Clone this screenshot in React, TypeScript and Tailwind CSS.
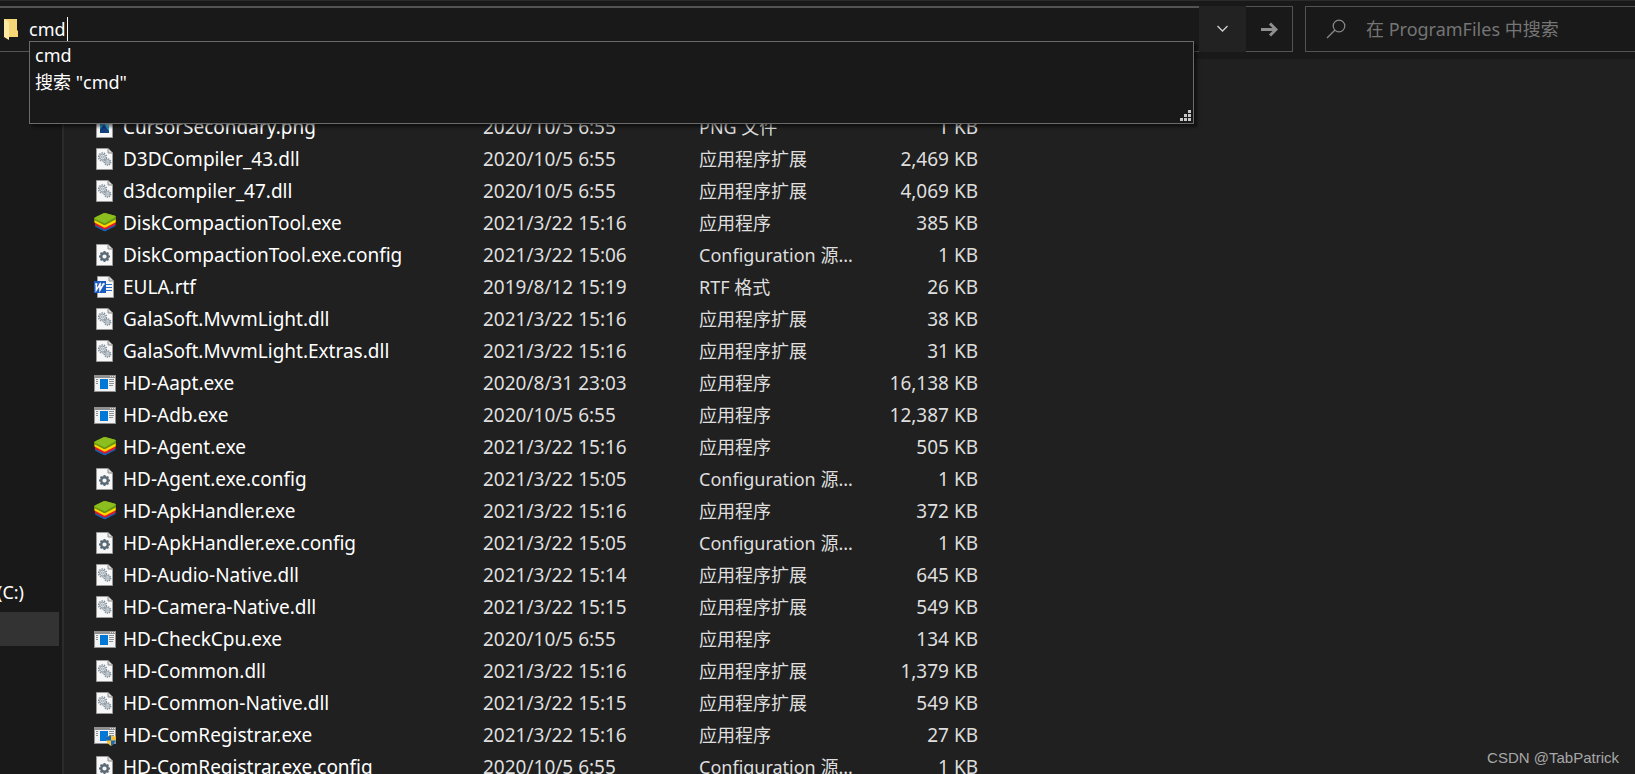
import React from "react";

type Kind = "png" | "dll" | "stack" | "config" | "word" | "app" | "shield";

type FileRow = { kind: Kind; name: string; date: string; type: string; size: string };

const EXT = "应用程序扩展";
const APP = "应用程序";
const CFG = "Configuration 源...";

const files: FileRow[] = [
  { kind: "png", name: "CursorSecondary.png", date: "2020/10/5 6:55", type: "PNG 文件", size: "1 KB" },
  { kind: "dll", name: "D3DCompiler_43.dll", date: "2020/10/5 6:55", type: EXT, size: "2,469 KB" },
  { kind: "dll", name: "d3dcompiler_47.dll", date: "2020/10/5 6:55", type: EXT, size: "4,069 KB" },
  { kind: "stack", name: "DiskCompactionTool.exe", date: "2021/3/22 15:16", type: APP, size: "385 KB" },
  { kind: "config", name: "DiskCompactionTool.exe.config", date: "2021/3/22 15:06", type: CFG, size: "1 KB" },
  { kind: "word", name: "EULA.rtf", date: "2019/8/12 15:19", type: "RTF 格式", size: "26 KB" },
  { kind: "dll", name: "GalaSoft.MvvmLight.dll", date: "2021/3/22 15:16", type: EXT, size: "38 KB" },
  { kind: "dll", name: "GalaSoft.MvvmLight.Extras.dll", date: "2021/3/22 15:16", type: EXT, size: "31 KB" },
  { kind: "app", name: "HD-Aapt.exe", date: "2020/8/31 23:03", type: APP, size: "16,138 KB" },
  { kind: "app", name: "HD-Adb.exe", date: "2020/10/5 6:55", type: APP, size: "12,387 KB" },
  { kind: "stack", name: "HD-Agent.exe", date: "2021/3/22 15:16", type: APP, size: "505 KB" },
  { kind: "config", name: "HD-Agent.exe.config", date: "2021/3/22 15:05", type: CFG, size: "1 KB" },
  { kind: "stack", name: "HD-ApkHandler.exe", date: "2021/3/22 15:16", type: APP, size: "372 KB" },
  { kind: "config", name: "HD-ApkHandler.exe.config", date: "2021/3/22 15:05", type: CFG, size: "1 KB" },
  { kind: "dll", name: "HD-Audio-Native.dll", date: "2021/3/22 15:14", type: EXT, size: "645 KB" },
  { kind: "dll", name: "HD-Camera-Native.dll", date: "2021/3/22 15:15", type: EXT, size: "549 KB" },
  { kind: "app", name: "HD-CheckCpu.exe", date: "2020/10/5 6:55", type: APP, size: "134 KB" },
  { kind: "dll", name: "HD-Common.dll", date: "2021/3/22 15:16", type: EXT, size: "1,379 KB" },
  { kind: "dll", name: "HD-Common-Native.dll", date: "2021/3/22 15:15", type: EXT, size: "549 KB" },
  { kind: "shield", name: "HD-ComRegistrar.exe", date: "2021/3/22 15:16", type: APP, size: "27 KB" },
  { kind: "config", name: "HD-ComRegistrar.exe.config", date: "2020/10/5 6:55", type: CFG, size: "1 KB" },
];

function Page({ x = 2 }: { x?: number }) {
  return (
    <g transform={`translate(${x} 0)`}>
      <path d="M.5 .5h11.5l4.5 4.5v16.500h-16z" fill="#f7f7f7" stroke="#9a9a9a" />
      <path d="M12 .5v4.500h4.500" fill="#dcdcdc" stroke="#8a8a8a" />
    </g>
  );
}

function AppWindow() {
  return (
    <g>
      <rect x=".5" y="3.500" width="21" height="16" fill="#f2f2f2" stroke="#8f8f8f" />
      <path d="M0 3h22v3H0z" fill="#8f8f8f" />
      <path d="M16 4h1v1h-1zM18 4h1v1h-1zM20 4h1v1h-1z" fill="#e4e4e4" />
      <rect x="6" y="7" width="8" height="10" fill="#0078d7" />
      <path d="M2 7.500h2M2 9.500h2M2 11.500h2M15 7.500h5M15 9.500h5M15 11.500h5M15 13.500h4" stroke="#8f8f8f" />
    </g>
  );
}

function FileIcon({ kind }: { kind: Kind }) {
  return (
    <svg viewBox="0 0 22 22" className="size-[22px] shrink-0" fill="none" aria-hidden="true">
      {kind === "png" && (
        <>
          <Page />
          <path d="M6 6h9v11H6z" fill="#2a9bd8" />
          <path d="M10 6h5v5l-3-1z" fill="#7fd0f2" />
          <path d="M6 17v-4l4-4 5 6v2z" fill="#123f7d" />
        </>
      )}
      {kind === "dll" && (
        <>
          <Page />
          <circle cx="8.500" cy="9" r="3.900" stroke="#7f8c97" strokeWidth="1.500" strokeDasharray="1.400 1" />
          <circle cx="8.500" cy="9" r="2.800" fill="#e3e8eb" stroke="#8d99a3" strokeWidth=".9" />
          <circle cx="8.500" cy="9" r="1.100" fill="#f7f7f7" stroke="#8d99a3" strokeWidth=".8" />
          <circle cx="13.500" cy="14" r="3.200" stroke="#7f8c97" strokeWidth="1.400" strokeDasharray="1.200 1" />
          <circle cx="13.500" cy="14" r="2.300" fill="#e9edef" stroke="#8d99a3" strokeWidth=".9" />
          <circle cx="13.500" cy="14" r=".9" fill="#f7f7f7" stroke="#8d99a3" strokeWidth=".8" />
        </>
      )}
      {kind === "config" && (
        <>
          <Page />
          <circle cx="10.500" cy="12.500" r="3.300" stroke="#5b6a75" strokeWidth="2.400" />
          <path
            d="M10.500 7v2M10.500 16v2M5 12.500h2M14 12.500h2M6.600 8.600l1.400 1.400M13 15l1.400 1.400M6.600 16.400l1.400-1.400M13 10l1.400-1.400"
            stroke="#5b6a75"
            strokeWidth="2"
          />
        </>
      )}
      {kind === "word" && (
        <>
          <Page x={3} />
          <path d="M12 8.500h6M12 11.500h6M12 14.500h6" stroke="#2b6cc4" />
          <path d="M0 5h12v12H0z" fill="#1d5bbf" />
          <path d="M2.300 7.500v6.500L6 8.500V14l3.800-6.500" stroke="#fff" strokeWidth="1.500" />
          <path d="M1 8h2.500M4.800 8h2.500M8.500 8H11" stroke="#fff" />
        </>
      )}
      {kind === "stack" && (
        <>
          <path d="M1 12.500 10.500 17 21.500 12.200V14L11.500 19.300h-1.500L1.200 14.800z" fill="#0d63b3" />
          <path d="M.7 10 10.500 15 21.600 9.500v3.200L11.500 17.600h-1.500L1 13z" fill="#e0182d" />
          <path d="M.3 7.500 10.500 13 21.800 7v3.300L11.500 15.500h-1.500L.5 10.500z" fill="#ffd500" />
          <path
            d="M.9 5.600 9 1.500q1.500-.7 3-.3L21 3.700q1 .4.900 1.400v2.200L11.300 13q-.6.300-1.200 0L.2 8V6.600q0-.6.700-1z"
            fill="#6a9a12"
          />
          <path
            d="M.9 5.600 9 1.500q1.500-.7 3-.3L21 3.700q1 .4.500 1.400L11.300 11q-.6.300-1.200 0L.2 6.600q0-.6.700-1z"
            fill="#8cbf1e"
          />
        </>
      )}
      {(kind === "app" || kind === "shield") && <AppWindow />}
      {kind === "shield" && (
        <>
          <path d="M17 11c1.500 1 3 1.500 5 1.500 0 4-1 7-5 9.500-4-2.500-5-5.500-5-9.500 2 0 3.500-.5 5-1.500z" fill="#f9c234" />
          <path d="M17 11v5.500h-4.700c-.3-1.300-.3-2.500-.3-4 2 0 3.500-.5 5-1.500zM17 16.500h4.500c-.6 2.300-1.800 4-4.500 5.500z" fill="#1469bd" />
        </>
      )}
    </svg>
  );
}

export default function App() {
  return (
    <div className="flex h-screen flex-col overflow-hidden bg-[#202020] font-['Noto_Sans','Noto_Sans_CJK_SC',sans-serif] text-lg leading-6 text-white">
      <header className="relative flex h-[59px] shrink-0 items-start gap-3 border-t border-[#2b2b2b] bg-[#191919] pt-[5px]">
        <form className="flex h-[46px] w-[1293px] shrink-0">
          <label className="flex min-w-0 flex-1 items-center border-t-2 border-b border-[#535353] pb-0.5 pl-1">
            <svg viewBox="0 0 14 22" className="h-[22px] w-3.5 shrink-0" aria-hidden="true">
              <path d="M0 1h13v11l1 1v6H4z" fill="#f5d576" />
              <path d="M0 1l5 3v18l-5-3z" fill="#ffe9a3" />
            </svg>
            <input
              aria-label="地址"
              defaultValue="cmd"
              className="ml-[11px] h-6 w-[38px] bg-transparent p-0 outline-none"
            />
            <span className="h-6 w-px bg-white" />
          </label>
          <button type="button" aria-label="展开" className="flex w-[47px] items-center justify-center bg-[#222222]">
            <svg viewBox="0 0 12 8" className="h-2 w-3" fill="none" aria-hidden="true">
              <path d="M.5 1l5 5 5-5" stroke="#d0d0d0" strokeWidth="1.300" />
            </svg>
          </button>
          <button
            type="submit"
            aria-label="转到"
            className="flex w-[47px] items-center justify-center border border-l-0 border-[#535353]"
          >
            <svg viewBox="0 0 18 16" className="h-4 w-[18px]" fill="none" aria-hidden="true">
              <path d="M1 8.500h15M10 2.500l6 6-6 6" stroke="#8f8f8f" strokeWidth="3" />
            </svg>
          </button>
        </form>
        <label className="flex h-[46px] min-w-0 flex-1 items-center gap-5 border border-r-0 border-[#535353] pl-5">
          <svg viewBox="0 0 20 20" className="size-5 shrink-0" fill="none" aria-hidden="true">
            <circle cx="13" cy="7" r="5.800" stroke="#8a8a8a" strokeWidth="1.200" />
            <path d="M9 11l-8 8" stroke="#8a8a8a" strokeWidth="1.300" />
          </svg>
          <input
            type="search"
            aria-label="搜索"
            placeholder="在 ProgramFiles 中搜索"
            className="min-w-0 flex-1 bg-transparent outline-none placeholder:text-[#757575]"
          />
        </label>
        <ul className="absolute top-10 left-[29px] z-10 h-[83px] w-[1165px] border border-[#6b6b6b] bg-[#191919] pl-[5px] shadow-[3px_3px_3px_rgba(0,0,0,0.5)]">
          <li className="h-[27px] leading-[27px]">cmd</li>
          <li className="h-[27px] leading-[27px]">搜索 "cmd"</li>
          <li className="absolute right-0.5 bottom-0.5">
            <svg viewBox="0 0 11 11" className="size-[11px]" aria-hidden="true">
              <path d="M8 0h3v3H8zM4 4h3v3H4zM8 4h3v3H8zM0 8h3v3H0zM4 8h3v3H4zM8 8h3v3H8z" fill="#c8c8c8" />
            </svg>
          </li>
        </ul>
      </header>

      <div className="flex min-h-0 flex-1">
        <nav className="flex w-16 shrink-0 flex-col border-r-2 border-[#2b2b2b] bg-[#191919] pt-[517px]">
          <a href="#c" className="mb-1 flex h-8 w-6 items-center justify-end overflow-hidden">
            (C:)
          </a>
          <a href="#d" aria-label="D:" className="h-[34px] w-[59px] bg-[#333333]" />
        </nav>
        <main className="min-w-0 flex-1 overflow-hidden pt-[52px] pl-[30px]">
          <table className="table-fixed border-collapse text-[19px] text-[#dedede]">
            <colgroup>
              <col className="w-[389px]" />
              <col className="w-[216px]" />
              <col className="w-[165px]" />
              <col className="w-[114px]" />
            </colgroup>
            <tbody>
              {files.map((f) => (
                <tr key={f.name} className="h-8">
                  <td className="p-0 text-white">
                    <span className="flex items-center gap-[7px] whitespace-nowrap">
                      <FileIcon kind={f.kind} />
                      {f.name}
                    </span>
                  </td>
                  <td className="p-0 whitespace-nowrap">{f.date}</td>
                  <td className="p-0 text-lg leading-6 whitespace-nowrap">{f.type}</td>
                  <td className="p-0 text-right whitespace-nowrap">{f.size}</td>
                </tr>
              ))}
            </tbody>
          </table>
        </main>
      </div>

      <footer className="absolute right-4 bottom-1 font-['Liberation_Sans',sans-serif] text-[15px] text-[#a8a8a8]">
        CSDN @TabPatrick
      </footer>
    </div>
  );
}
